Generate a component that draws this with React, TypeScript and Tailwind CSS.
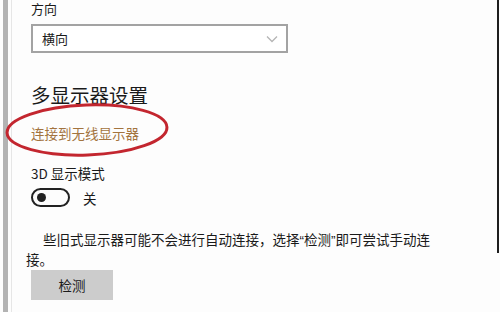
import React from "react";

export default function App() {
  const font = { fontFamily: '"Noto Sans CJK SC", "Noto Sans", sans-serif' };
  return (
    <div
      className="relative w-[500px] h-[312px] overflow-hidden bg-[#fdfdfd] flex text-[#1a1a1a]"
      style={font}
    >
      <div className="w-[3px] shrink-0" />
      <div className="w-[5px] shrink-0 bg-[#b3b3b3]" />
      <div className="w-[3px] shrink-0" />
      <div className="w-px shrink-0 bg-[#e6e6e6]" />
      <div className="flex-1 flex flex-col pl-[19px]">
        <div className="text-[13px] leading-[16px] pt-px">方向</div>
        <div className="mt-[7px] w-[257px] h-[29px] border-2 border-[#a3a3a3] bg-white flex items-center justify-between pl-[9px] pr-[8px]">
          <span className="text-[13px] leading-[16px]">横向</span>
          <svg width="12" height="8" viewBox="0 0 12 8">
            <polyline points="1,1.5 6,6.5 11,1.5" fill="none" stroke="#b5b5b5" strokeWidth="1.3" />
          </svg>
        </div>
        <div className="mt-[30px] text-[19.5px] leading-[24px]">多显示器设置</div>
        <div className="mt-[17px] text-[13.5px] leading-[18px] text-[#a3743f]">连接到无线显示器</div>
        <div className="mt-[22px] text-[13.5px] leading-[18px]">3D 显示模式</div>
        <div className="mt-[6px] flex items-center">
          <div className="w-[39px] h-[19px] rounded-full border-2 border-[#222] flex items-center pl-[4px]">
            <div className="w-[9px] h-[9px] rounded-full bg-[#222]" />
          </div>
          <span className="ml-[13px] text-[13.5px] leading-[18px]">关</span>
        </div>
        <div className="mt-[23px] ml-[-5px] text-[13.5px] leading-[18px] indent-[17px] text-[#1a1a1a]">
          些旧式显示器可能不会进行自动连接，选择
          <span style={{ fontFamily: '"Liberation Sans", sans-serif' }}>“</span>
          检测
          <span style={{ fontFamily: '"Liberation Sans", sans-serif' }}>”</span>
          即可尝试手动连
          <br />
          接。
        </div>
        <div className="mt-[2px] w-[82px] h-[30px] bg-[#cccccc] flex items-center justify-center text-[13.5px]">
          检测
        </div>
      </div>
      <div className="w-[2px] h-[253px] shrink-0 bg-[#1e1e1e]" />
      <div className="w-px shrink-0" />
      <svg
        className="absolute left-0 top-[100px]"
        width="180"
        height="64"
        viewBox="0 0 180 64"
      >
        <ellipse
          cx="87"
          cy="30"
          rx="80"
          ry="25"
          transform="rotate(-2 87 30)"
          fill="none"
          stroke="#c3262f"
          strokeWidth="3"
        />
      </svg>
    </div>
  );
}
